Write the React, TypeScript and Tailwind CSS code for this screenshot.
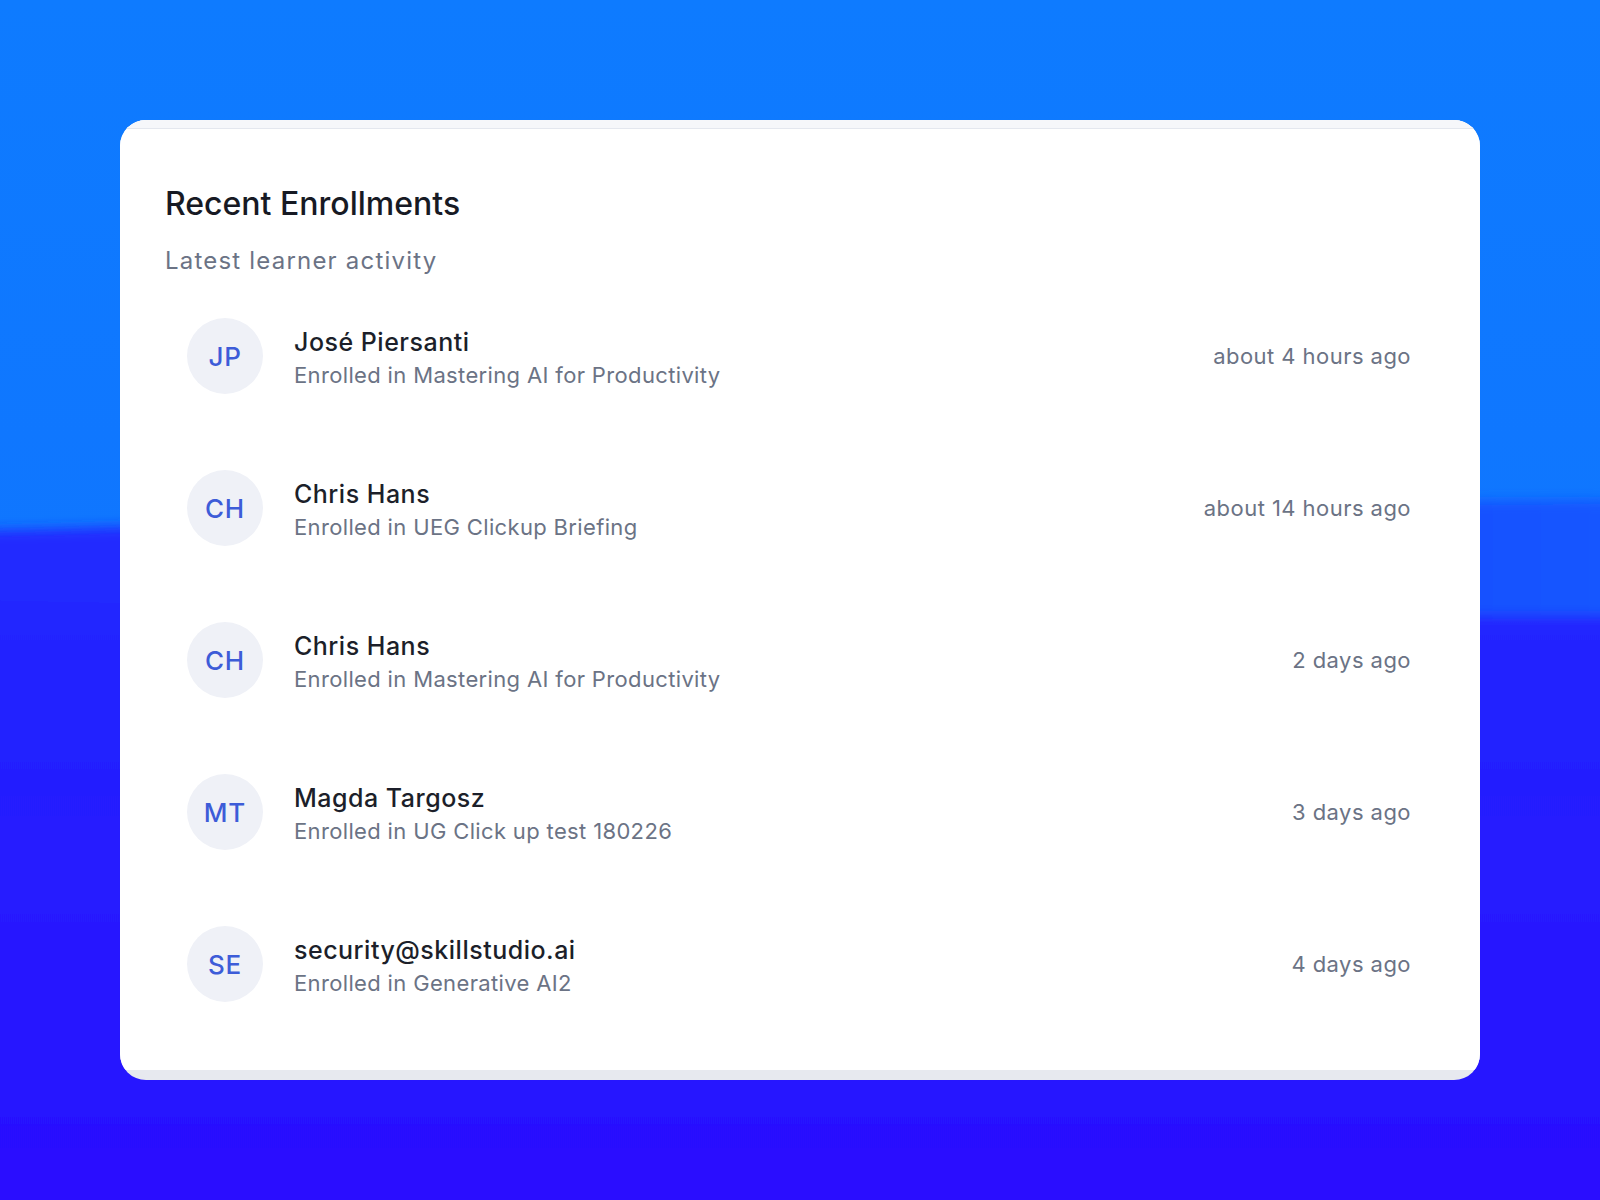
import React from "react";

const rows = [
  { initials: "JP", name: "José Piersanti", course: "Enrolled in Mastering AI for Productivity", time: "about 4 hours ago" },
  { initials: "CH", name: "Chris Hans", course: "Enrolled in UEG Clickup Briefing", time: "about 14 hours ago" },
  { initials: "CH", name: "Chris Hans", course: "Enrolled in Mastering AI for Productivity", time: "2 days ago" },
  { initials: "MT", name: "Magda Targosz", course: "Enrolled in UG Click up test 180226", time: "3 days ago" },
  { initials: "SE", name: "security@skillstudio.ai", course: "Enrolled in Generative AI2", time: "4 days ago" },
];

function Background() {
  return (
    <svg className="absolute inset-0 h-full w-full" viewBox="0 0 1600 1200" preserveAspectRatio="none">
      <defs>
        <linearGradient id="top" x1="0" y1="0" x2="0" y2="1">
          <stop offset="0" stopColor="#0e7bff" />
          <stop offset="1" stopColor="#1170ff" />
        </linearGradient>
        <linearGradient id="mid" x1="0" y1="0" x2="1" y2="0">
          <stop offset="0" stopColor="#2128ff" />
          <stop offset="0.6" stopColor="#1d3cff" />
          <stop offset="1" stopColor="#1858ff" />
        </linearGradient>
        <linearGradient id="low" x1="0" y1="0" x2="0" y2="1">
          <stop offset="0" stopColor="#2226ff" />
          <stop offset="1" stopColor="#2a0cff" />
        </linearGradient>
        <filter id="soft" x="-10%" y="-10%" width="120%" height="120%">
          <feGaussianBlur stdDeviation="6" />
        </filter>
      </defs>
      <rect x="0" y="0" width="1600" height="1200" fill="url(#top)" />
      <g filter="url(#soft)">
        <path d="M-50,532 C300,522 900,505 1650,500 L1650,1260 L-50,1260 Z" fill="url(#mid)" />
        <path d="M-50,600 C500,610 1100,615 1650,615 L1650,1260 L-50,1260 Z" fill="url(#low)" />
      </g>
    </svg>
  );
}

export default function App() {
  return (
    <div
      className="relative h-[1200px] w-[1600px] overflow-hidden"
      style={{ fontFamily: "Inter, 'Noto Sans', sans-serif" }}
    >
      <Background />
      <div className="relative px-[120px] pt-[120px]">
        <div className="h-[960px] overflow-hidden rounded-[26px] bg-[#e7e9ef]">
          <div className="flex h-[950px] flex-col bg-white">
            <div className="h-[8px] bg-[#f6f7fa]" />
            <div className="flex flex-1 flex-col border-t border-[#e4e7ee] px-[45px]">
              <div className="pt-[55px]">
                <h2 className="text-[32px] leading-[40px] font-medium text-[#171a24]">
                  Recent Enrollments
                </h2>
                <p className="mt-[21px] text-[24px] leading-[32px] tracking-[1.2px] text-[#6b7385]">
                  Latest learner activity
                </p>
              </div>
              <div className="mt-[3px] flex flex-col pr-[24px] pl-[22px]">
                {rows.map((r, i) => (
                  <div key={i} className="flex h-[152px] items-center">
                    <div className="flex h-[76px] w-[76px] shrink-0 items-center justify-center rounded-full bg-[#eff1f7] text-[26px] font-medium tracking-[0.8px] text-[#3d5cd8]">
                      {r.initials}
                    </div>
                    <div className="ml-[31px] flex min-w-0 flex-1 flex-col pt-[2px]">
                      <div className="text-[25px] leading-[36px] font-medium tracking-[0.5px] text-[#1c1f2a]">
                        {r.name}
                      </div>
                      <div className="text-[22px] leading-[31px] tracking-[0.35px] text-[#6b7385]">{r.course}</div>
                    </div>
                    <div className="text-[22px] tracking-[0.45px] text-[#6b7385]">{r.time}</div>
                  </div>
                ))}
              </div>
            </div>
          </div>
        </div>
      </div>
    </div>
  );
}
